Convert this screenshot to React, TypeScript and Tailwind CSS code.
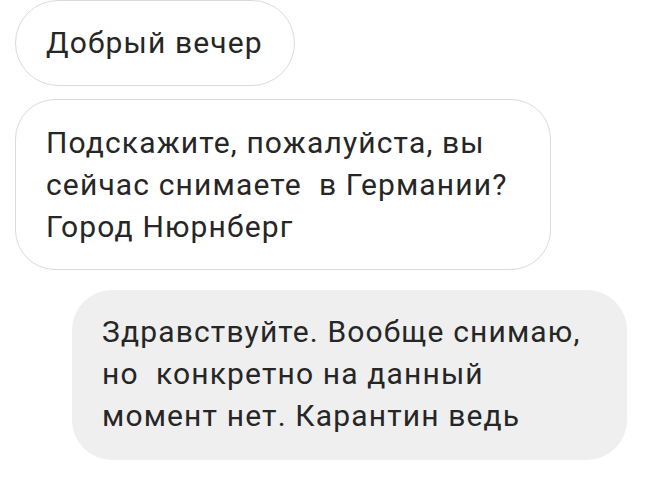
export default function App() {
  return (
    <main className="min-h-[479px] w-[649px] bg-white font-['Roboto','Liberation_Sans',sans-serif] text-[30px] leading-[42px] tracking-[1.15px] text-[#262626]">
      <div className="flex flex-col items-start">
        <div className="ml-[15px] flex h-[86px] w-[280px] items-center rounded-full border border-[#dbdbdb] pl-[30px]">
          Добрый вечер
        </div>
        <div className="ml-[15px] mt-[13px] w-[536px] rounded-[40px] border border-[#dbdbdb] px-[30px] pb-[21px] pt-[22px]">
          Подскажите, пожалуйста, вы
          <br />
          сейчас снимаете&nbsp; в Германии?
          <br />
          Город Нюрнберг
        </div>
        <div className="ml-[72px] mt-[20px] w-[555px] rounded-[40px] bg-[#efefef] px-[30px] pb-[23px] pt-[21px]">
          Здравствуйте. Вообще снимаю,
          <br />
          но&nbsp; конкретно на данный
          <br />
          момент нет. Карантин ведь
        </div>
      </div>
    </main>
  );
}
